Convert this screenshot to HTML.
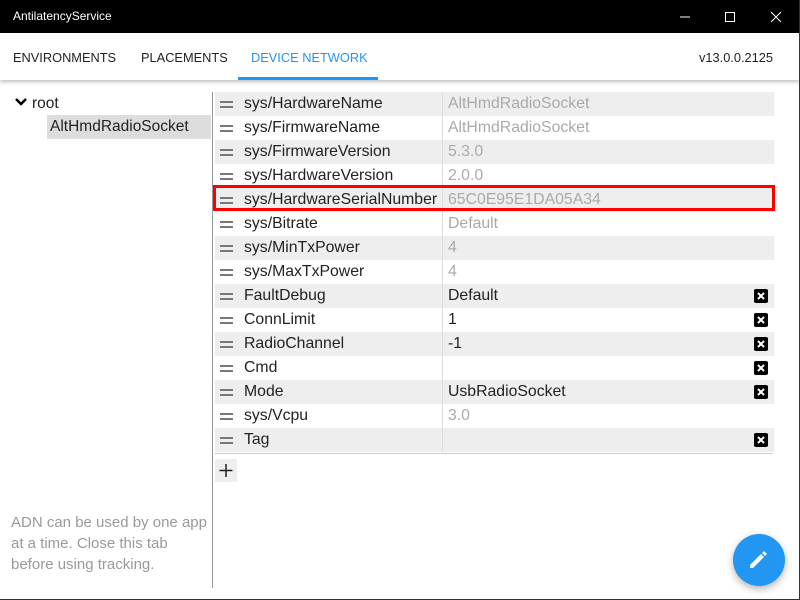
<!DOCTYPE html>
<html><head><style>
body{margin:0;width:800px;height:600px;overflow:hidden;font-family:"Segoe UI","Liberation Sans",sans-serif;background:#fff;position:relative}
.title{position:absolute;left:0;top:0;width:800px;height:33px;background:#000;color:#fff;font-size:12px}
.title span{position:absolute;left:13px;top:9px}
.tabs{position:absolute;left:0;top:33px;width:800px;height:47px;background:#fff;box-shadow:0 2px 4px rgba(0,0,0,.25);font-size:12.8px;color:#222}
.tabs div{position:absolute;top:17px}
.row{position:absolute;left:215px;width:559px;height:24px;font-size:15.8px;color:#222}
.row.g{background:#eeeeee}
.row .h{position:absolute;left:5px;top:9px;width:13px;height:2px;background:#777;box-shadow:0 5px 0 #777}
.row .n{position:absolute;left:29px;top:3px}
.row .s{position:absolute;left:227px;top:0;width:1px;height:24px;background:#ddd}
.row .v{position:absolute;left:233px;top:3px}
.row .v.d{color:#aaa}
.row .x{position:absolute;left:539px;top:5px;width:14px;height:14px;background:#000;border-radius:2px}
</style></head><body>
<div class="title"><span>AntilatencyService</span>
<svg style="position:absolute;left:680px;top:11px" width="110" height="12"><line x1="0" y1="6" x2="10" y2="6" stroke="#fff"/><rect x="45.5" y="1.5" width="9" height="9" fill="none" stroke="#fff"/><path d="M91 1L101 11M101 1L91 11" stroke="#fff"/></svg></div>
<div class="tabs"><div style="left:13px">ENVIRONMENTS</div><div style="left:141px">PLACEMENTS</div><div style="left:251px;color:#2196F3">DEVICE NETWORK</div><div style="left:699px">v13.0.0.2125</div>
<div style="position:absolute;left:238px;top:44px;width:140px;height:3px;background:#2196F3"></div></div>
<div style="position:absolute;left:0;top:0;width:799px;height:599px;border-right:1px solid #333;border-bottom:1px solid #333;pointer-events:none"></div>
<svg style="position:absolute;left:15px;top:97px" width="12" height="10"><path d="M1 2L6 7L11 2" stroke="#000" stroke-width="2.5" fill="none"/></svg>
<div style="position:absolute;left:32px;top:95px;font-size:15.5px;color:#222">root</div>
<div style="position:absolute;left:47px;top:115px;width:164px;height:24px;background:#ddd;font-size:15.5px;color:#222"><span style="position:absolute;left:3px;top:3px">AltHmdRadioSocket</span></div>
<div style="position:absolute;left:212px;top:92px;width:1px;height:496px;background:#999"></div>
<div style="position:absolute;left:11px;top:512px;font-size:15px;color:#999;line-height:21px;width:200px">ADN can be used by one app at a time. Close this tab before using tracking.</div>

<div class="row g" style="top:92px"><i class="h"></i><span class="n">sys/HardwareName</span><i class="s"></i><span class="v d">AltHmdRadioSocket</span></div>
<div class="row" style="top:116px"><i class="h"></i><span class="n">sys/FirmwareName</span><i class="s"></i><span class="v d">AltHmdRadioSocket</span></div>
<div class="row g" style="top:140px"><i class="h"></i><span class="n">sys/FirmwareVersion</span><i class="s"></i><span class="v d">5.3.0</span></div>
<div class="row" style="top:164px"><i class="h"></i><span class="n">sys/HardwareVersion</span><i class="s"></i><span class="v d">2.0.0</span></div>
<div class="row g" style="top:188px"><i class="h"></i><span class="n">sys/HardwareSerialNumber</span><i class="s"></i><span class="v d">65C0E95E1DA05A34</span></div>
<div class="row" style="top:212px"><i class="h"></i><span class="n">sys/Bitrate</span><i class="s"></i><span class="v d">Default</span></div>
<div class="row g" style="top:236px"><i class="h"></i><span class="n">sys/MinTxPower</span><i class="s"></i><span class="v d">4</span></div>
<div class="row" style="top:260px"><i class="h"></i><span class="n">sys/MaxTxPower</span><i class="s"></i><span class="v d">4</span></div>
<div class="row g" style="top:284px"><i class="h"></i><span class="n">FaultDebug</span><i class="s"></i><span class="v">Default</span><svg class="x" viewBox="0 0 14 14"><path d="M4 4L10 10M10 4L4 10" stroke="#fff" stroke-width="2"/></svg></div>
<div class="row" style="top:308px"><i class="h"></i><span class="n">ConnLimit</span><i class="s"></i><span class="v">1</span><svg class="x" viewBox="0 0 14 14"><path d="M4 4L10 10M10 4L4 10" stroke="#fff" stroke-width="2"/></svg></div>
<div class="row g" style="top:332px"><i class="h"></i><span class="n">RadioChannel</span><i class="s"></i><span class="v">-1</span><svg class="x" viewBox="0 0 14 14"><path d="M4 4L10 10M10 4L4 10" stroke="#fff" stroke-width="2"/></svg></div>
<div class="row" style="top:356px"><i class="h"></i><span class="n">Cmd</span><i class="s"></i><span class="v"></span><svg class="x" viewBox="0 0 14 14"><path d="M4 4L10 10M10 4L4 10" stroke="#fff" stroke-width="2"/></svg></div>
<div class="row g" style="top:380px"><i class="h"></i><span class="n">Mode</span><i class="s"></i><span class="v">UsbRadioSocket</span><svg class="x" viewBox="0 0 14 14"><path d="M4 4L10 10M10 4L4 10" stroke="#fff" stroke-width="2"/></svg></div>
<div class="row" style="top:404px"><i class="h"></i><span class="n">sys/Vcpu</span><i class="s"></i><span class="v d">3.0</span></div>
<div class="row g" style="top:428px"><i class="h"></i><span class="n">Tag</span><i class="s"></i><span class="v"></span><svg class="x" viewBox="0 0 14 14"><path d="M4 4L10 10M10 4L4 10" stroke="#fff" stroke-width="2"/></svg></div>
<div style="position:absolute;left:215px;top:453px;width:558px;height:1px;background:#ccc"></div>
<div style="position:absolute;left:215px;top:459px;width:22px;height:23px;background:#eee"><svg width="22" height="23"><path d="M11 5V18M4.5 11.5H17.5" stroke="#222" stroke-width="1.5"/></svg></div>
<div style="position:absolute;left:213px;top:185px;width:556px;height:20px;border:3px solid #f00"></div>
<div style="position:absolute;left:733px;top:534px;width:52px;height:52px;border-radius:50%;background:#2196F3;box-shadow:0 3px 8px rgba(0,0,0,.3)">
<svg width="52" height="52"><path d="M17 34L17 31L28 20L31 23L20 34Z M29 19L31 17L34 20L32 22Z" fill="#fff"/></svg></div>
</body></html>
